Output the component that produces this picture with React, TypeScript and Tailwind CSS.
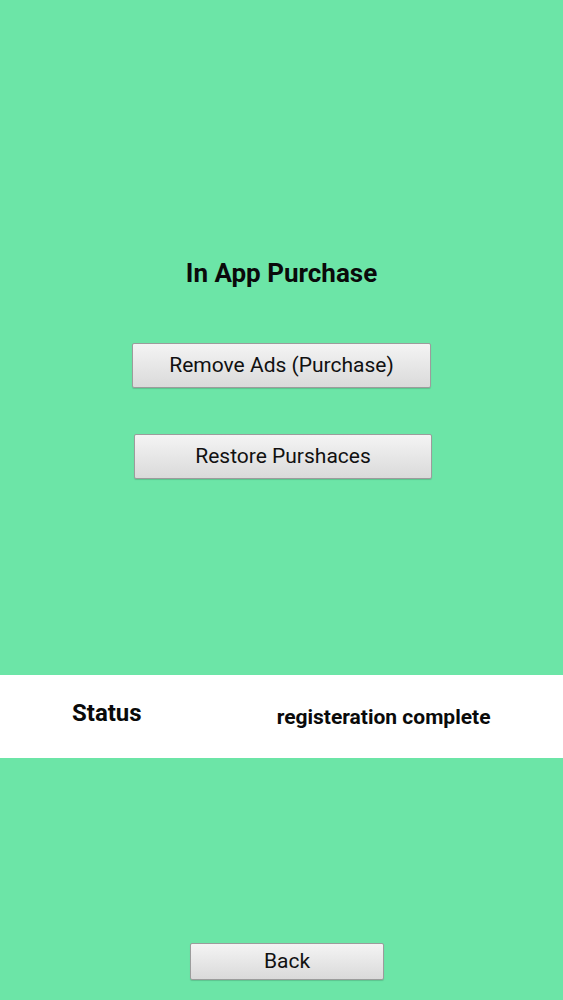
const btn =
  'flex items-center justify-center rounded-[2px] border border-[#9c9c9c] bg-gradient-to-b from-[#f4f4f4] to-[#dadada] text-[#111] shadow-[0_1px_1px_rgba(0,0,0,0.15)]';

export default function App() {
  return (
    <div className="flex h-[1000px] w-full flex-col bg-[#6ce5a7] pt-[258px] font-['Roboto',sans-serif]">
      <h1 className="h-[30px] text-center text-[26px] font-bold leading-[30px] text-[#0a0a0a]">In App Purchase</h1>

      <button className={`${btn} ml-[132px] mt-[55px] h-[45px] w-[299px] text-[21px]`}>Remove Ads (Purchase)</button>
      <button className={`${btn} ml-[134px] mt-[46px] h-[45px] w-[298px] text-[21px]`}>Restore Purshaces</button>

      {/* status strip */}
      <div className="mt-[196px] flex h-[83px] bg-white text-[#0a0a0a]">
        <span className="ml-[72px] mt-[24px] h-[28px] text-[24px] font-bold leading-[28px]">Status</span>
        <span className="ml-[135px] mt-[30px] h-[24px] text-[21px] font-bold leading-[24px]">registeration complete</span>
      </div>

      <button className={`${btn} ml-[190px] mt-[185px] h-[37px] w-[194px] text-[21px]`}>Back</button>
    </div>
  );
}
